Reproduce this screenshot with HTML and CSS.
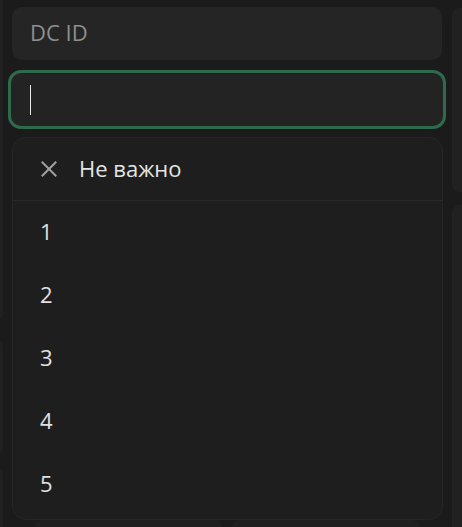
FILE: index.html
```html
<!DOCTYPE html>
<html lang="ru">
<head>
<meta charset="utf-8">
<link rel="stylesheet" href="styles.css">
</head>
<body>
<div class="edge-left">
  <div class="edge-panel ep1"></div>
  <div class="edge-panel ep2"></div>
  <div class="edge-panel ep3"></div>
</div>
<div class="edge-right">
  <div class="edge-panel er1"></div>
  <div class="edge-panel er2"></div>
</div>
<main class="column">
  <div class="label-box">DC ID</div>
  <div class="input-box"><span class="caret"></span></div>
  <div class="dropdown">
    <div class="opt opt-clear">
      <svg class="x-icon" width="18" height="18" viewBox="0 0 18 18"><path d="M2.5 2.5 L15.5 15.5 M15.5 2.5 L2.5 15.5" stroke="#a0a0a0" stroke-width="2" stroke-linecap="square"/></svg>
      <span>Не важно</span>
    </div>
    <div class="opt">1</div>
    <div class="opt">2</div>
    <div class="opt">3</div>
    <div class="opt">4</div>
    <div class="opt">5</div>
  </div>
  <div class="bottom-row">
    <div class="bottom-panel"></div>
    <div class="bottom-panel"></div>
  </div>
</main>
</body>
</html>
```
FILE: styles.css
```css
html, body {
  margin: 0;
  padding: 0;
  background: #1b1b1b;
  width: 462px;
  height: 527px;
  overflow: hidden;
  font-family: "Open Sans", "Noto Sans", sans-serif;
}
.edge-left {
  position: absolute;
  left: -10px;
  top: 0;
  width: 13px;
  height: 527px;
}
.edge-right {
  position: absolute;
  left: 452px;
  top: 0;
  width: 20px;
  height: 527px;
}
.edge-panel {
  position: absolute;
  left: 0;
  right: 0;
  background: #212121;
  border-radius: 8px;
}
.ep1 { top: -10px; height: 330px; }
.ep2 { top: 340px; height: 115px; }
.ep3 { top: 468px; height: 80px; }
.er1 { top: 8px; height: 182px; border: 1px solid #242424; }
.er2 { top: 205px; height: 340px; border: 1px solid #242424; }

.column {
  width: 438px;
  margin-left: 8px;
  padding-top: 7px;
  display: flex;
  flex-direction: column;
}
.label-box {
  margin: 0 4px;
  height: 53px;
  box-sizing: border-box;
  background: #252525;
  border-radius: 10px;
  color: #8e8e8e;
  font-size: 22px;
  line-height: 51px;
  padding-left: 18px;
}
.input-box {
  margin-top: 10px;
  height: 59px;
  box-sizing: border-box;
  border: 3px solid #2f6a4f;
  border-radius: 13px;
  background: #232323;
  padding-left: 19px;
  display: flex;
  align-items: center;
}
.caret {
  display: block;
  width: 1px;
  height: 30px;
  background: #e8e8e8;
}
.dropdown {
  margin: 8px 3px 0 4px;
  height: 383px;
  box-sizing: border-box;
  background: #1e1e1e;
  border: 1px solid #262626;
  border-radius: 14px;
  display: flex;
  flex-direction: column;
}
.opt {
  height: 63px;
  flex: none;
  display: flex;
  align-items: center;
  padding-left: 27px;
  padding-bottom: 3px;
  box-sizing: border-box;
  color: #e0e0e0;
  font-size: 22px;
}
.opt-clear {
  border-bottom: 1px solid #292929;
  gap: 21px;
  color: #e4e4e4;
}
.x-icon { flex: none; margin-top: 2px; }
.bottom-row {
  margin: 0 34px 0 27px;
  display: grid;
  grid-template-columns: 187px 188px;
  gap: 10px;
}
.bottom-panel {
  height: 30px;
  background: #1f1f1f;
  border-radius: 8px;
}
```
